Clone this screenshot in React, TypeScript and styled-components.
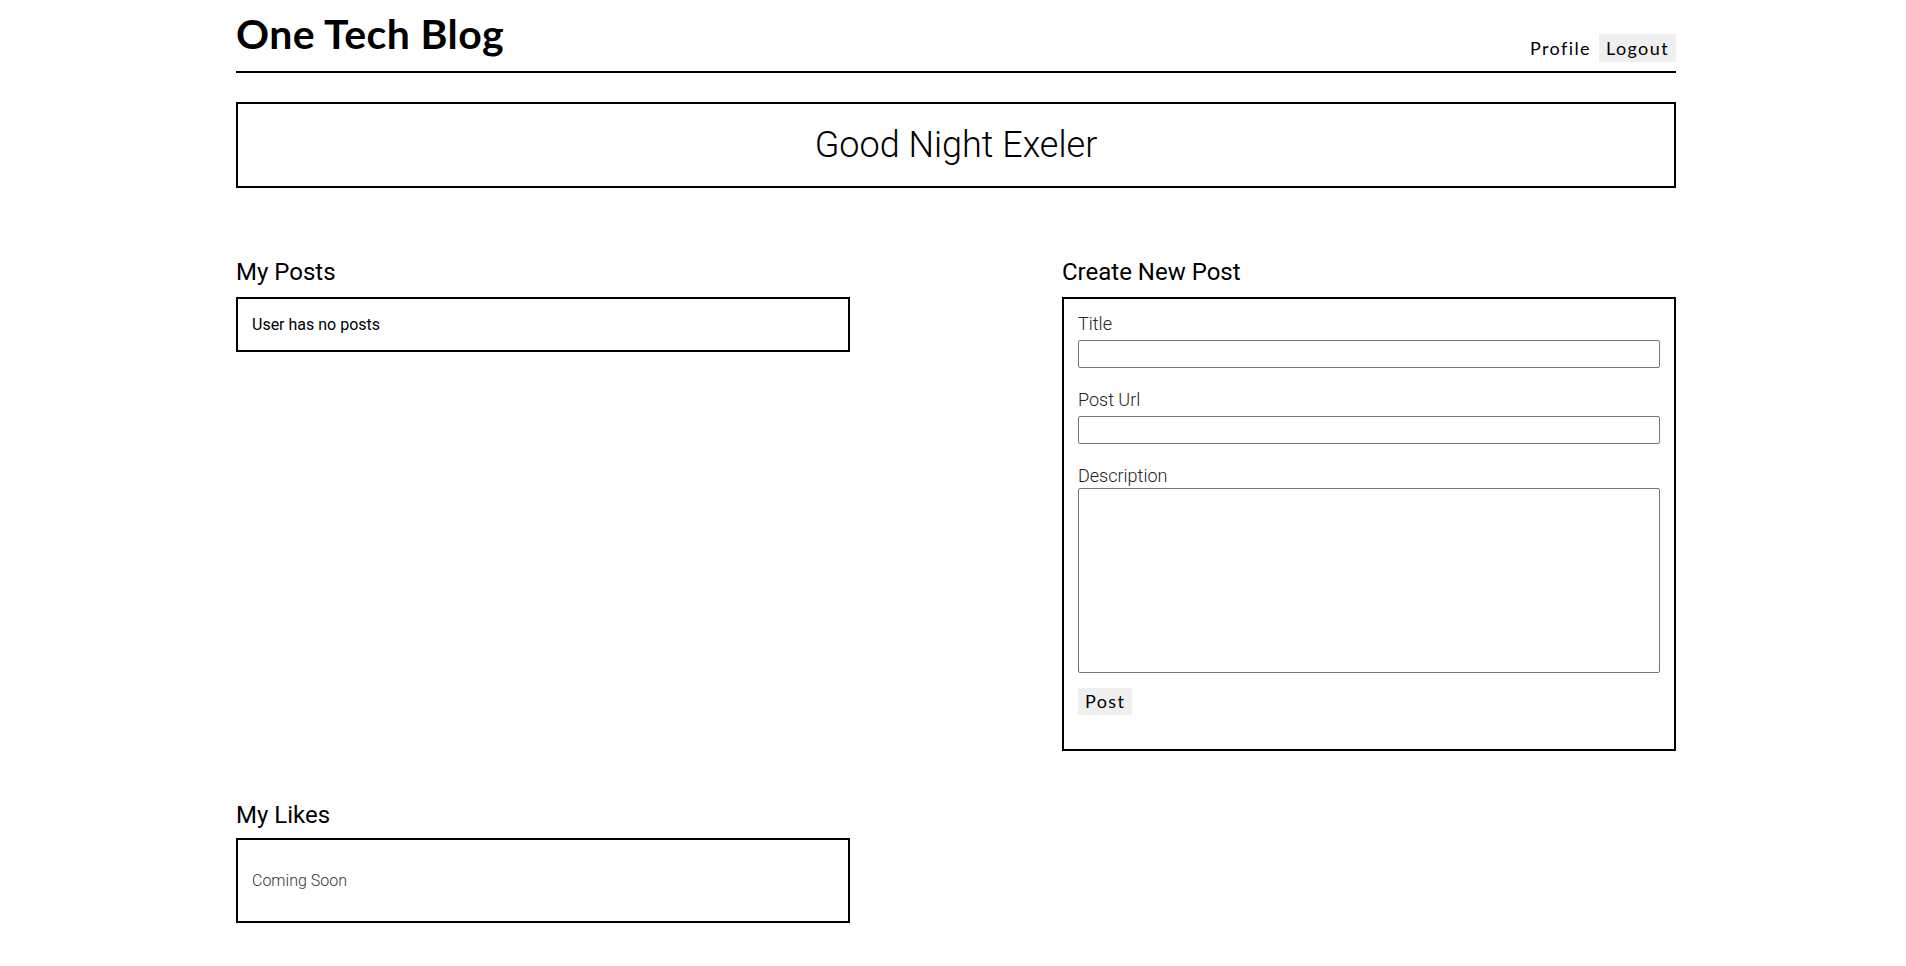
import React from "react"
import styled, { createGlobalStyle } from "styled-components"

const GlobalStyle = createGlobalStyle`
  html, body {
    margin: 0;
    padding: 0;
    background: #fff;
    color: #000;
    font-family: Roboto, "Liberation Sans", sans-serif;
  }
  * {
    box-sizing: border-box;
  }
`

const Page = styled.div`
  width: 1440px;
  margin: 0 0 0 calc(50% - 717px);
  padding-bottom: 40px;
`

const Header = styled.header`
  display: flex;
  align-items: flex-end;
  justify-content: space-between;
  height: 73px;
  border-bottom: 2px solid #000;
  padding-bottom: 9px;
`

const Brand = styled.h1`
  margin: 0 0 5px;
  font-family: Lato, "Noto Sans", sans-serif;
  font-weight: 700;
  font-size: 41px;
  line-height: 46px;
  letter-spacing: 0.4px;
`

const Nav = styled.nav`
  display: flex;
  align-items: center;
  gap: 8px;
`

const NavLink = styled.a<{ $boxed?: boolean }>`
  font-family: Lato, "Noto Sans", sans-serif;
  font-size: 18px;
  letter-spacing: 1.4px;
  color: #000;
  text-decoration: none;
  line-height: 28px;
  padding: 0 ${p => (p.$boxed ? "7px" : "0")};
  background: ${p => (p.$boxed ? "#efefef" : "transparent")};
  cursor: pointer;
`

const Greeting = styled.section`
  margin-top: 29px;
  height: 86px;
  border: 2px solid #000;
  display: flex;
  align-items: center;
  justify-content: center;
`

const GreetingText = styled.h2`
  margin: 0;
  font-size: 36px;
  font-weight: 300;
  line-height: 42px;
`

const Row = styled.div`
  display: flex;
  justify-content: space-between;
  align-items: flex-start;
  margin-top: 70px;
`

const Column = styled.div`
  width: 614px;
  display: flex;
  flex-direction: column;
`

const SectionTitle = styled.h3<{ $tight?: boolean }>`
  margin: 0 0 ${p => (p.$tight ? "9px" : "11px")};
  font-size: 24px;
  font-weight: 400;
  line-height: 28px;
`

const Card = styled.div<{ $tall?: boolean }>`
  border: 2px solid #000;
  padding: ${p => (p.$tall ? "31px 14px" : "16px 14px")};
  font-size: 16px;
  line-height: 19px;
`

const Muted = styled.span`
  color: #333;
  font-weight: 300;
`

const Form = styled.form`
  border: 2px solid #000;
  padding: 14px 14px 34px;
  display: flex;
  flex-direction: column;
`

const Label = styled.label`
  font-size: 18px;
  font-weight: 300;
  color: #222;
  line-height: 21px;
`

const Input = styled.input`
  display: block;
  width: 100%;
  height: 28px;
  margin: 6px 0 21px;
  border: 1px solid #767676;
  border-radius: 2px;
  font-family: Roboto, sans-serif;
  font-size: 16px;
`

const TextArea = styled.textarea`
  display: block;
  width: 100%;
  height: 185px;
  margin: 2px 0 15px;
  border: 1px solid #767676;
  border-radius: 2px;
  resize: none;
  font-family: Roboto, sans-serif;
  font-size: 16px;
`

const PostButton = styled.button`
  align-self: flex-start;
  border: none;
  background: #efefef;
  font-family: Lato, "Noto Sans", sans-serif;
  font-size: 18px;
  letter-spacing: 1.4px;
  line-height: 27px;
  padding: 0 7px;
  color: #000;
`

const LikesRow = styled.div`
  margin-top: 50px;
`

export default function App() {
  return (
    <>
      <GlobalStyle />
      <Page>
        <Header>
          <Brand>One Tech Blog</Brand>
          <Nav>
            <NavLink>Profile</NavLink>
            <NavLink $boxed>Logout</NavLink>
          </Nav>
        </Header>

        <Greeting>
          <GreetingText>Good Night Exeler</GreetingText>
        </Greeting>

        <Row>
          <Column>
            <SectionTitle>My Posts</SectionTitle>
            <Card>User has no posts</Card>
          </Column>
          <Column>
            <SectionTitle>Create New Post</SectionTitle>
            <Form onSubmit={e => e.preventDefault()}>
              <Label htmlFor="title">Title</Label>
              <Input id="title" type="text" />
              <Label htmlFor="url">Post Url</Label>
              <Input id="url" type="text" />
              <Label htmlFor="desc">Description</Label>
              <TextArea id="desc" />
              <PostButton type="submit">Post</PostButton>
            </Form>
          </Column>
        </Row>

        <LikesRow>
          <Column>
            <SectionTitle $tight>My Likes</SectionTitle>
            <Card $tall>
              <Muted>Coming Soon</Muted>
            </Card>
          </Column>
        </LikesRow>
      </Page>
    </>
  )
}
